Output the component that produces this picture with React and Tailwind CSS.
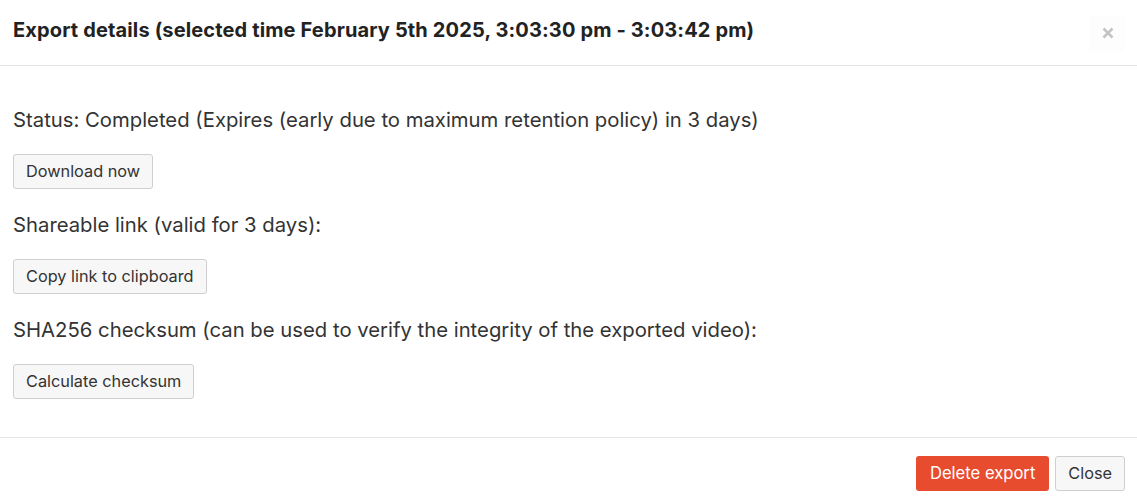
import React from 'react'

const Btn = ({ children }) => (
  <button className="h-[35px] px-[12px] border border-[#cfcfcf] rounded-[3px] bg-[#f7f7f7] text-[16.3px] text-[#333] leading-none">
    {children}
  </button>
)

const App = () => {
  return (
    <div className="w-[1137px] h-[497px] bg-white text-[#333] font-['Inter',sans-serif] flex flex-col">
      <div className="h-[66px] flex items-center justify-between pl-[13px] pr-[12px] pb-[5px] border-b border-[#e5e5e5] shrink-0">
        <h4 className="text-[20px] font-bold text-[#222] tracking-[0.14px]">
          Export details (selected time February 5th 2025, 3:03:30 pm - 3:03:42 pm)
        </h4>
        <button className="w-[35px] h-[35px] flex items-center justify-center bg-[#fdfdfd] text-[#c4c4c4] mt-[6px]">
          <svg width="12" height="12" viewBox="0 0 12 12">
            <path d="M1.5 1.5 L10.5 10.5 M10.5 1.5 L1.5 10.5" stroke="currentColor" strokeWidth="2.6" />
          </svg>
        </button>
      </div>
      <div className="flex-1 px-[13px] pt-[42px] flex flex-col items-start">
        <p className="text-[20.3px] leading-[24px]">Status: Completed (Expires (early due to maximum retention policy) in 3 days)</p>
        <div className="mt-[22px]"><Btn>Download now</Btn></div>
        <p className="text-[20.3px] leading-[24px] mt-[24px]">Shareable link (valid for 3 days):</p>
        <div className="mt-[22px]"><Btn>Copy link to clipboard</Btn></div>
        <p className="text-[20.3px] leading-[24px] mt-[24px]">SHA256 checksum (can be used to verify the integrity of the exported video):</p>
        <div className="mt-[22px]"><Btn>Calculate checksum</Btn></div>
      </div>
      <div className="h-[60px] border-t border-[#e5e5e5] flex items-start justify-end gap-[6px] pt-[18px] pr-[12px] shrink-0">
        <button className="h-[35px] px-[14px] rounded-[3px] bg-[#e84c2f] text-white text-[16.6px] leading-none">Delete export</button>
        <button className="h-[35px] px-[12px] border border-[#cfcfcf] rounded-[3px] bg-[#f7f7f7] text-[16.3px] text-[#333] leading-none">Close</button>
      </div>
    </div>
  )
}

export default App
